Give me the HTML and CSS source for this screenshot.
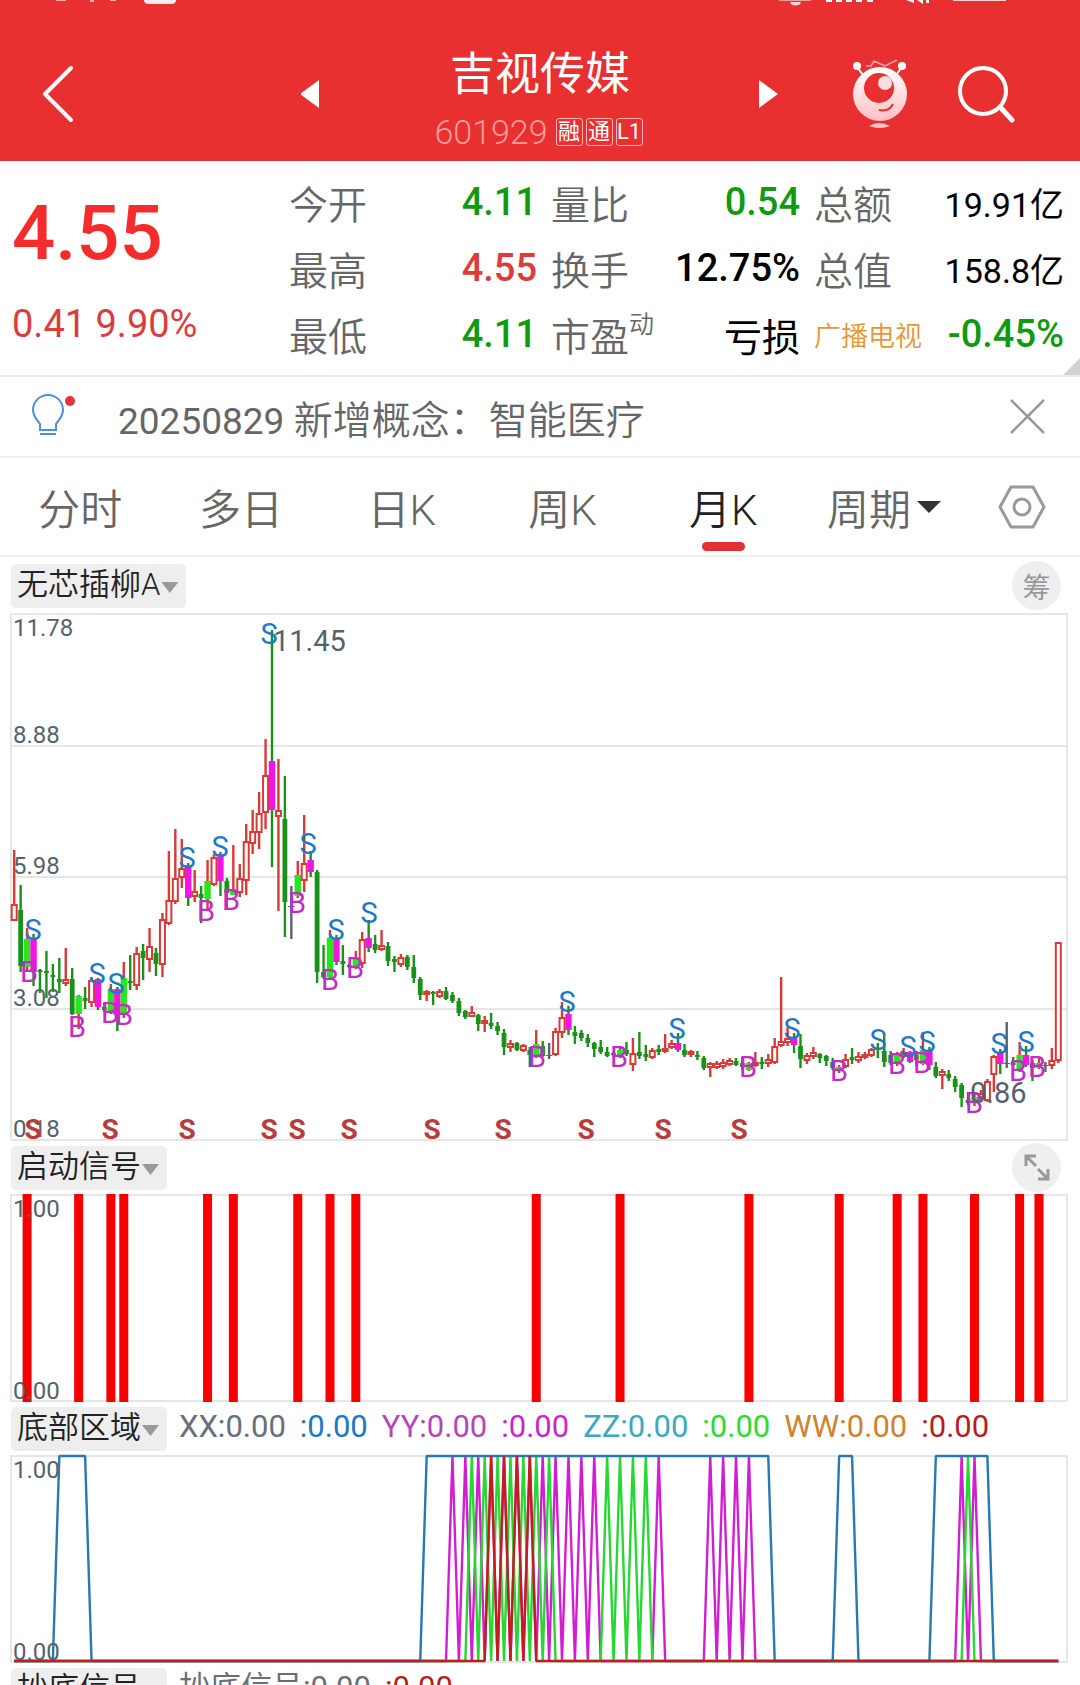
FILE: index.html
```html
<!DOCTYPE html>
<html lang="zh-CN">
<head>
    <meta charset="UTF-8">
    <meta name="viewport" content="width=device-width, initial-scale=1.0">
    <title>吉视传媒 601929</title>
    <link rel="stylesheet" href="styles.css">
</head>
<body>
<header class="header">
    <!-- 状态栏 -->
    <svg class="status" viewBox="0 0 1080 8" aria-hidden="true">
        <path d="M56 0h10v1h-10zM90 0h4v2h-4zM110 0h6v1h-6z" fill="#f6b0b0"/>
        <path d="M144 0h32q0 4-5 4h-22q-5 0-5-4z" fill="#f4ecf4"/>
        <path d="M779 0h32v1h-32z" fill="#f09a9a"/>
        <path d="M790 2h11q-1 3.500-5.500 3.500t-5.500-3.500z" fill="#fbd5d5"/>
        <path d="M826 0h6v2h-6zM836 0h6v2h-6zM846 0h6v2h-6zM856 0h6v2h-6zM867 0h6v2h-6z" fill="#fff"/>
        <path d="M906 0l8 3v-3zM917 0l6 4v-4zM926 0h3v3h-3z" fill="#fff"/>
        <path d="M953 0h53v1h-53z" fill="#fbd5d5"/>
    </svg>
    <div class="navbar">
        <button class="icon-btn back" aria-label="返回">
            <svg width="34" height="58" viewBox="0 0 34 58"><path d="M30 3L4 29l26 26" fill="none" stroke="#fff" stroke-width="4" stroke-linecap="round" stroke-linejoin="round"/></svg>
        </button>
        <div class="switcher">
            <button class="icon-btn" aria-label="上一只">
                <svg width="20" height="28" viewBox="0 0 20 28"><path d="M18 0v28L-1 14z" fill="#fff"/></svg>
            </button>
            <div class="stock">
                <h1 class="stock-name">吉视传媒</h1>
                <div class="stock-code">
                    <span class="code">601929</span>
                    <span class="tag">融</span>
                    <span class="tag">通</span>
                    <span class="tag">L1</span>
                </div>
            </div>
            <button class="icon-btn" aria-label="下一只">
                <svg width="20" height="28" viewBox="0 0 20 28"><path d="M0 0v28l19-14z" fill="#fff"/></svg>
            </button>
        </div>
        <div class="tools">
            <button class="icon-btn" aria-label="助手">
                <svg width="56" height="70" viewBox="0 0 56 70">
                    <defs>
                        <linearGradient id="robot" x1="0" y1="0" x2="0" y2="1">
                            <stop offset="0" stop-color="#fff"/>
                            <stop offset="1" stop-color="#ffc0c4"/>
                        </linearGradient>
                    </defs>
                    <path d="M14 7h5l3-5 11 5 12-6" fill="none" stroke="#f7a3a6" stroke-width="1.500"/>
                    <path d="M5 8l6 8M50 8l-6 8" stroke="#fff" stroke-width="2"/>
                    <circle cx="5" cy="7" r="4" fill="#fff"/>
                    <circle cx="50" cy="7" r="4" fill="#fff"/>
                    <circle cx="28" cy="35" r="27" fill="url(#robot)"/>
                    <circle cx="27" cy="29" r="15" fill="#e83030"/>
                    <circle cx="33" cy="24" r="7" fill="#ffdcdd"/>
                    <path d="M27 51q10 2 14-6" fill="none" stroke="#e83030" stroke-width="2"/>
                    <path d="M17 67q10-6 21 0q-10 4-21 0z" fill="#ffc4c6"/>
                </svg>
            </button>
            <button class="icon-btn" aria-label="搜索">
                <svg width="58" height="58" viewBox="0 0 58 58"><path d="M43 42l12 13" stroke="#fff" stroke-width="5" stroke-linecap="round"/><circle cx="26" cy="26" r="23" fill="none" stroke="#fff" stroke-width="4"/></svg>
            </button>
        </div>
    </div>
</header>

<section class="quote">
    <div class="price">
        <div class="now">4.55</div>
        <div class="change">0.41 9.90%</div>
    </div>
    <dl class="stats">
        <div class="stat"><dt>今开</dt><dd class="down">4.11</dd></div>
        <div class="stat"><dt>量比</dt><dd class="down">0.54</dd></div>
        <div class="stat"><dt>总额</dt><dd class="amount">19.91亿</dd></div>
        <div class="stat"><dt>最高</dt><dd class="up">4.55</dd></div>
        <div class="stat"><dt>换手</dt><dd>12.75%</dd></div>
        <div class="stat"><dt>总值</dt><dd class="amount">158.8亿</dd></div>
        <div class="stat"><dt>最低</dt><dd class="down">4.11</dd></div>
        <div class="stat"><dt>市盈<sup>动</sup></dt><dd class="loss">亏损</dd></div>
        <div class="stat"><dt class="sector">广播电视</dt><dd class="down">-0.45%</dd></div>
    </dl>
</section>

<section class="notice">
    <svg class="bulb" width="46" height="46" viewBox="0 0 46 46">
        <path d="M9 36v-6C6 26 2 22 2 16a15 15 0 0 1 30 0C32 22 28 26 25 30v6z" fill="none" stroke="#4a90dc" stroke-width="2"/>
        <path d="M9 40h16" stroke="#4a90dc" stroke-width="2"/>
        <circle cx="39" cy="7" r="5" fill="#e03535"/>
    </svg>
    <p class="notice-text"><time datetime="2025-08-29">20250829</time> 新增概念：智能医疗</p>
    <button class="icon-btn" aria-label="关闭">
        <svg width="35" height="35" viewBox="0 0 35 35"><path d="M1 1l33 33M34 1L1 34" stroke="#999" stroke-width="2.500"/></svg>
    </button>
</section>

<nav class="tabs">
    <button class="tab">分时</button>
    <button class="tab">多日</button>
    <button class="tab">日K</button>
    <button class="tab">周K</button>
    <button class="tab active">月K</button>
    <button class="tab period">周期<svg width="24" height="12" viewBox="0 0 24 12"><path d="M0 0h24L12 12z" fill="#333"/></svg></button>
    <button class="icon-btn setting" aria-label="设置">
        <svg width="48" height="44" viewBox="0 0 48 44"><path d="M13 2h22l11 20-11 20H13L2 22z" fill="none" stroke="#999" stroke-width="3" stroke-linejoin="round"/><circle cx="24" cy="22" r="8" fill="none" stroke="#999" stroke-width="3"/></svg>
    </button>
</nav>

<main>
    <div class="panel-head first">
        <button class="chip">无芯插柳A<i class="arrow"></i></button>
        <button class="round" aria-label="筹码">筹</button>
    </div>
    <svg class="chart" id="kline" viewBox="0 0 1058 526"></svg>

    <div class="panel-head">
        <button class="chip">启动信号<i class="arrow"></i></button>
        <button class="round" aria-label="全屏">
            <svg width="28" height="28" viewBox="0 0 28 28" fill="none" stroke="#999" stroke-width="3"><path d="M13 2H3v10M3 2l10 10M25 15v10H15M25 25L15 15"/></svg>
        </button>
    </div>
    <svg class="chart" id="signal" viewBox="0 0 1058 206"></svg>

    <div class="panel-head">
        <button class="chip">底部区域<i class="arrow"></i></button>
        <div class="legend">
            <span class="c-gray">XX:0.00</span>
            <span class="c-blue">:0.00</span>
            <span class="c-purple">YY:0.00</span>
            <span class="c-magenta">:0.00</span>
            <span class="c-cyan">ZZ:0.00</span>
            <span class="c-lime">:0.00</span>
            <span class="c-orange">WW:0.00</span>
            <span class="c-red">:0.00</span>
        </div>
    </div>
    <svg class="chart" id="zone" viewBox="0 0 1058 206"></svg>

    <div class="panel-head">
        <button class="chip">抄底信号<i class="arrow"></i></button>
        <div class="legend">
            <span class="c-gray">抄底信号:0.00</span>
            <span class="c-red">:0.00</span>
        </div>
    </div>
</main>
<script src="chart.js"></script>
</body>
</html>
```

FILE: styles.css
```css
* {
    margin: 0;
    padding: 0;
    box-sizing: border-box;
}

body {
    height: 100vh;
    overflow: hidden;
    background: #fff;
    color: #000;
    font-family: Roboto, "Noto Sans CJK SC", sans-serif;
}

button {
    border: none;
    background: none;
    color: inherit;
    font-family: inherit;
    cursor: pointer;
}

svg {
    display: block;
}

.icon-btn {
    flex: none;
}

/* 顶部 */
.header {
    height: 161px;
    background: #e83030;
    color: #fff;
}

.status {
    width: 100%;
}

.navbar {
    display: grid;
    grid-template-columns: 1fr 478px 1fr;
    align-items: center;
    height: 153px;
    padding-top: 19px;
}

.back {
    justify-self: start;
    padding-left: 41px;
}

.switcher {
    display: flex;
    justify-content: space-between;
    align-items: center;
}

.stock {
    padding-top: 14px;
    text-align: center;
}

.stock-name {
    font-size: 45px;
    line-height: 62px;
    font-weight: 400;
}

.stock-code {
    display: flex;
    align-items: center;
    justify-content: center;
    gap: 3px;
    height: 52px;
    padding-right: 3px;
}

.code {
    margin-right: 5px;
    font-size: 34px;
    font-weight: 300;
    color: #ff9c9c;
}

.tag {
    width: 27px;
    height: 28px;
    border: 1px solid #ffb0b0;
    border-radius: 3px;
    font-size: 22px;
    line-height: 26px;
}

.tools {
    display: flex;
    justify-content: flex-end;
    align-items: center;
    gap: 49px;
    padding-right: 65px;
}

/* 行情 */
.quote {
    position: relative;
    display: grid;
    grid-template-columns: 277px 1fr;
    height: 216px;
    padding: 8px 16px 0 12px;
    border-bottom: 2px solid #ececec;
}

.quote::after {
    content: "";
    position: absolute;
    right: 0;
    bottom: 0;
    width: 17px;
    height: 17px;
    background: #d2d2d2;
    clip-path: polygon(100% 0, 100% 100%, 0 100%);
}

.now {
    padding-top: 20px;
    font-size: 76px;
    font-weight: 500;
    line-height: 88px;
    color: #f42c2c;
}

.change {
    padding-top: 24px;
    font-size: 38px;
    line-height: 46px;
    color: #dc3c3c;
}

.stats {
    display: grid;
    grid-template-columns: 248px 249px 1fr;
    grid-auto-rows: 66px;
    column-gap: 14px;
}

.stat {
    display: flex;
    align-items: center;
    justify-content: space-between;
    white-space: nowrap;
}

.stat dt {
    font-size: 39px;
    font-weight: 350;
    color: #666;
}

.stat dd {
    font-size: 38px;
    font-weight: 500;
}

.stat sup {
    font-size: 25px;
    line-height: 24px;
    vertical-align: 18px;
}

.stat .sector {
    font-size: 27px;
    color: #e8963a;
}

.stat .amount {
    font-size: 34px;
    font-weight: 400;
}

.stat .loss {
    font-weight: 400;
}

.up {
    color: #dc3c3c;
}

.down {
    color: #109a10;
}

/* 提示 */
.notice {
    display: flex;
    align-items: center;
    height: 81px;
    padding: 0 35px 0 31px;
    border-bottom: 2px solid #f0f0f0;
}

.notice-text {
    flex: 1;
    padding-left: 41px;
    font-size: 39px;
    font-weight: 350;
    color: #666;
}

.notice-text time {
    font-size: 37px;
    font-weight: 400;
}

/* 周期切换 */
.tabs {
    display: grid;
    grid-template-columns: repeat(6, 160fr) 115fr;
    align-items: center;
    height: 99px;
    border-bottom: 2px solid #f0f0f0;
}

.tab {
    position: relative;
    height: 97px;
    font-size: 42px;
    font-weight: 350;
    color: #666;
}

.tab.active {
    color: #222;
}

.tab.active::after {
    content: "";
    position: absolute;
    left: 50%;
    bottom: 4px;
    width: 43px;
    height: 9px;
    margin-left: -21px;
    border-radius: 5px;
    background: #e03232;
}

.period {
    display: flex;
    align-items: center;
    justify-content: center;
    gap: 6px;
}

.setting {
    justify-self: center;
}

/* 指标 */
.panel-head {
    display: flex;
    align-items: center;
    height: 55px;
    padding: 0 19px 0 11px;
}

.panel-head.first {
    height: 57px;
}

.chip {
    display: flex;
    align-items: center;
    height: 44px;
    padding: 0 8px 2px 6px;
    border-radius: 5px;
    background: #eee;
    font-size: 31px;
    font-weight: 350;
    line-height: 42px;
    color: #222;
}

.arrow {
    width: 17px;
    height: 11px;
    margin: 6px 0 0 1px;
    background: #999;
    clip-path: polygon(0 0, 100% 0, 50% 100%);
}

.round {
    display: flex;
    align-items: center;
    justify-content: center;
    width: 49px;
    height: 49px;
    margin-left: auto;
    border-radius: 50%;
    background: #efefef;
    font-size: 28px;
    color: #999;
}

.legend {
    display: flex;
    gap: 14px;
    padding-left: 12px;
    font-size: 31px;
    line-height: 44px;
    height: 48px;
    white-space: nowrap;
}

.c-gray { color: #66707a; }
.c-blue { color: #1e78c8; }
.c-purple { color: #b446b9; }
.c-magenta { color: #c828c8; }
.c-cyan { color: #3caabe; }
.c-lime { color: #32d732; }
.c-orange { color: #d2822d; }
.c-red { color: #b41e1e; }

.chart {
    width: calc(100% - 22px);
    margin: 0 11px;
    overflow: visible;
}

.frame {
    fill: none;
    stroke: #e6e6e6;
    stroke-width: 2;
}

.axis,
.peak {
    fill: #55626e;
    font-size: 24px;
}

.peak {
    font-size: 29px;
}

.mark {
    font-family: Roboto, sans-serif;
    font-size: 29px;
    text-anchor: middle;
}

.sell { fill: #1e78c8; }
.buy { fill: #c32dc3; }
.top { fill: #b93c3c; font-size: 28px; font-weight: 700; }
```

FILE: chart.js
```js
const STEP = 6.445;
const COLORS = {r: '#d83a36', g: '#1a921a', m: '#f414e4', l: '#28e61e', d: '#5a6470'};

// 类型, 最高, 实体上沿, 实体下沿, 最低
const candles = `r236,290,307,307 g271,296,352,358 l314,325,353,356 m320,324,358,372 g355,356,358,379 g337,357,359,384
g350,361,363,378 g344,365,368,379 r334,365,370,372 g354,365,400,401 l381,382,400,415 g373,384,387,395 r363,366,389,393
m364,365,393,396 g389,393,396,398 l370,375,398,400 m373,375,400,417 l348,364,400,404 g341,367,369,376 r333,339,372,376
g330,337,344,366 r314,332,346,358 g334,339,350,362 r299,305,351,363 r237,286,310,311 r215,264,288,290 r225,254,264,274
m249,251,284,292 r256,277,283,288 g272,280,284,309 l246,267,285,295 r240,243,271,272 m238,240,267,282 g264,267,279,295
l231,275,281,281 r250,264,279,283 r210,227,267,281 r196,217,230,240 r178,199,219,235 r125,161,199,215 m16,147,196,253
r145,196,203,297 g162,205,288,323 d272,292,293,325 l247,261,282,284 r201,249,267,278 m237,246,258,263 g256,258,358,369
g331,358,363,365 l316,324,363,365 m321,324,348,351 g331,347,350,361 g350,351,353,354 l337,345,354,355 r318,325,350,354
m306,324,334,338 g321,330,336,339 r316,331,336,337 g328,332,347,352 g342,345,348,358 r340,343,351,353 g341,343,353,356
g341,353,364,369 g363,365,381,386 r376,377,381,387 g377,378,380,391 r375,377,383,384 g373,377,385,386 g378,381,387,389
g384,387,399,402 g396,397,403,405 r392,398,403,403 g400,401,410,417 r402,406,410,418 g399,409,412,415 g408,412,417,421
g415,419,433,441 r426,429,434,438 g428,429,436,437 r430,431,437,438 g433,436,441,453 l416,430,442,444 g427,432,442,443
d429,441,442,445 r414,417,441,442 r388,403,419,424 m392,400,416,421 g412,418,422,430 g416,419,424,427 g420,424,429,433
g428,429,435,443 g426,433,438,440 g433,438,442,443 g438,439,441,443 l433,436,443,444 g428,436,440,442 r424,439,451,457
g418,438,442,445 g431,440,443,447 r434,436,444,445 g431,435,438,441 r420,434,438,439 r426,429,434,435 m419,429,436,438
g430,436,441,443 r436,437,441,443 g437,441,443,446 g442,444,454,456 r448,449,454,463 r447,449,454,455 r445,448,453,455
r444,446,451,452 g444,447,451,452 g443,449,453,456 l448,449,456,457 r438,448,452,453 g443,448,450,455 r440,445,450,453
r424,432,449,450 r363,427,432,433 r413,424,429,432 m419,423,431,439 g420,432,445,454 r439,441,447,450 r433,438,443,445
g439,440,444,449 g441,442,447,452 g444,448,454,456 l451,453,456,459 r440,445,453,454 g434,443,446,450 r438,442,447,449
r438,440,444,445 r434,435,442,443 m429,434,436,444 g421,437,448,453 g437,441,449,451 l438,440,450,452 r434,438,443,444
m437,438,448,449 g437,441,446,452 l418,436,450,451 m433,436,451,456 g448,453,462,464 r455,457,462,475 g456,460,464,467
g462,465,473,478 g469,471,484,493 g478,486,489,491 l479,483,489,492 r476,479,484,486 r465,467,487,488 r441,442,461,478
m435,439,450,460 d408,449,450,454 g443,448,451,454 l428,441,456,458 m432,441,451,453 g446,449,454,467 l444,449,454,455
d448,451,452,458 r434,446,452,455 r328,328,447,449`.split(/\s+/).map(s => [s[0], ...s.slice(1).split(',').map(Number)]);

const sells = [[22, 326], [86, 370], [105, 380], [176, 254], [209, 243], [258, 30], [297, 240], [325, 326], [358, 309],
    [556, 398], [666, 425], [781, 425], [867, 436], [897, 443], [916, 438], [988, 440], [1015, 438]];
const buys = [[18, 368], [66, 423], [99, 409], [113, 411], [195, 307], [220, 296], [286, 299], [319, 376], [344, 364],
    [526, 453], [608, 453], [737, 463], [828, 467], [886, 460], [911, 459], [963, 499], [1007, 467], [1026, 463]];
const tops = [22, 99, 176, 258, 286, 338, 421, 492, 575, 652, 728];

const px = i => 3.2 + i * STEP;
const rect = (x, y, w, h, attr) => `<rect x="${x}" y="${y}" width="${w}" height="${h}" ${attr}/>`;
const text = (x, y, cls, str) => `<text x="${x}" y="${y}" class="${cls}">${str}</text>`;
const frame = h => rect(0, 0, 1056, h, 'class="frame"');

// K线
function drawKline() {
    let out = frame(526) + '<path class="frame" d="M0 132H1056M0 263H1056M0 395H1056"/>';
    [['11.78', 22], ['8.88', 129], ['5.98', 260], ['3.08', 392], ['0.18', 523]].forEach(a => out += text(2, a[1], 'axis', a[0]));
    candles.forEach(([type, high, top, bottom, low], i) => {
        const x = px(i), c = COLORS[type];
        const wick = {m: COLORS.g, l: COLORS.r}[type] || c;
        out += `<path d="M${x} ${high}V${top}M${x} ${bottom}V${low}" stroke="${wick}" stroke-width="2.4"/>`;
        if (type === 'r') {
            out += rect(x - 2.5, top + 1, 5, Math.max(bottom - top - 2, 2), `fill="#fff" stroke="${c}" stroke-width="2"`);
        } else {
            const w = type === 'g' ? 4.8 : 6.4;
            out += rect(x - w / 2, top, w, bottom - top, `fill="${c}"`);
        }
    });
    buys.forEach(p => out += text(p[0], p[1], 'mark buy', 'B'));
    sells.forEach(p => out += text(p[0], p[1], 'mark sell', 'S'));
    tops.forEach(x => out += text(x, 525, 'mark top', 'S'));
    out += text(262, 37, 'peak', '11.45') + text(959, 489, 'peak', '0.86');
    document.getElementById('kline').innerHTML = out;
}

// 启动信号
function drawSignal() {
    let out = frame(206);
    candles.forEach((c, i) => {
        if (c[0] === 'l') out += rect(px(i) - 4.5, -1, 9, 208, 'fill="#f80000"');
    });
    out += text(2, 22, 'axis', '1.00') + text(2, 204, 'axis', '0.00');
    document.getElementById('signal').innerHTML = out;
}

// 底部区域
function line(color, isHigh) {
    let d = '';
    for (let i = 0; i < candles.length; i++) {
        d += `${i ? 'L' : 'M'}${px(i)} ${isHigh(i) ? 0 : 205}`;
    }
    return `<path d="${d}" fill="none" stroke="${color}" stroke-width="2.4" stroke-linejoin="bevel"/>`;
}

function drawZone() {
    const yy = [68, 70, 72, 74, 76, 78, 80, 82, 84, 86, 88, 90, 100, 108, 110, 112, 114, 147, 149];
    const zz = [71, 73, 75, 77, 79, 81, 83, 92, 94, 96, 98, 148];
    const ww = [74, 76, 78, 80];
    const xx = [[7, 11], [64, 117], [128, 130], [143, 151]];
    let out = frame(206);
    out += line('#d21ed2', i => yy.includes(i));
    out += line('#28d733', i => zz.includes(i));
    out += line('#2878b4', i => xx.some(r => i >= r[0] && i <= r[1]));
    out += line('#c31e1e', i => ww.includes(i));
    out += text(2, 22, 'axis', '1.00') + text(2, 204, 'axis', '0.00');
    document.getElementById('zone').innerHTML = out;
}

drawKline();
drawSignal();
drawZone();
```
